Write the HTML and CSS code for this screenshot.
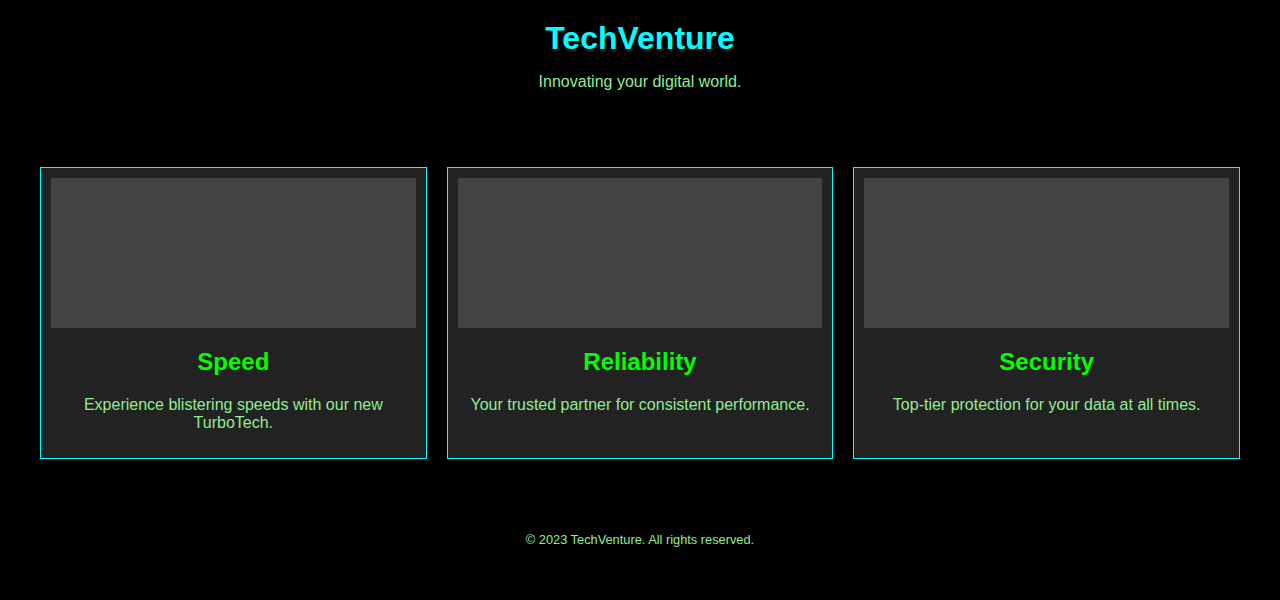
FILE: index.html
```html
<!DOCTYPE html>
<html lang="en">
<head>
<meta charset="utf-8">
<title>TechVenture</title>
<link rel="stylesheet" href="styles.css">
</head>
<body>
<header class="site-header">
  <h1 class="brand">TechVenture</h1>
  <p class="tagline">Innovating your digital world.</p>
</header>
<main class="features">
  <div class="card">
    <div class="card-image"></div>
    <h2 class="card-title">Speed</h2>
    <p class="card-text">Experience blistering speeds with our new TurboTech.</p>
  </div>
  <div class="card">
    <div class="card-image"></div>
    <h2 class="card-title">Reliability</h2>
    <p class="card-text">Your trusted partner for consistent performance.</p>
  </div>
  <div class="card">
    <div class="card-image"></div>
    <h2 class="card-title">Security</h2>
    <p class="card-text">Top-tier protection for your data at all times.</p>
  </div>
</main>
<footer class="site-footer">
  <p class="copyright">© 2023 TechVenture. All rights reserved.</p>
</footer>
</body>
</html>
```

FILE: styles.css
```css
html, body {
  margin: 0;
  padding: 0;
  background: #000;
  color: #90ee90;
  font-family: "Liberation Sans", Arial, sans-serif;
}

.site-header {
  padding: 20px;
  text-align: center;
}

.brand {
  margin: 0;
  font-size: 32px;
  color: #00ffff;
}

.tagline {
  margin: 16px 0;
  font-size: 16px;
}

.features {
  display: flex;
  gap: 20px;
  padding: 40px;
}

.card {
  flex: 1;
  background: #222;
  border: 1px solid #00ffff;
  padding: 10px;
  text-align: center;
}

.card-image {
  height: 150px;
  background: #444;
}

.card-title {
  margin: 20px 0;
  font-size: 24px;
  color: #00ff00;
}

.card-text {
  margin: 16px 0;
  font-size: 16px;
}

.site-footer {
  padding: 20px;
  text-align: center;
}

.copyright {
  font-size: 12.8px;
  margin: 12.8px 0;
}
```
